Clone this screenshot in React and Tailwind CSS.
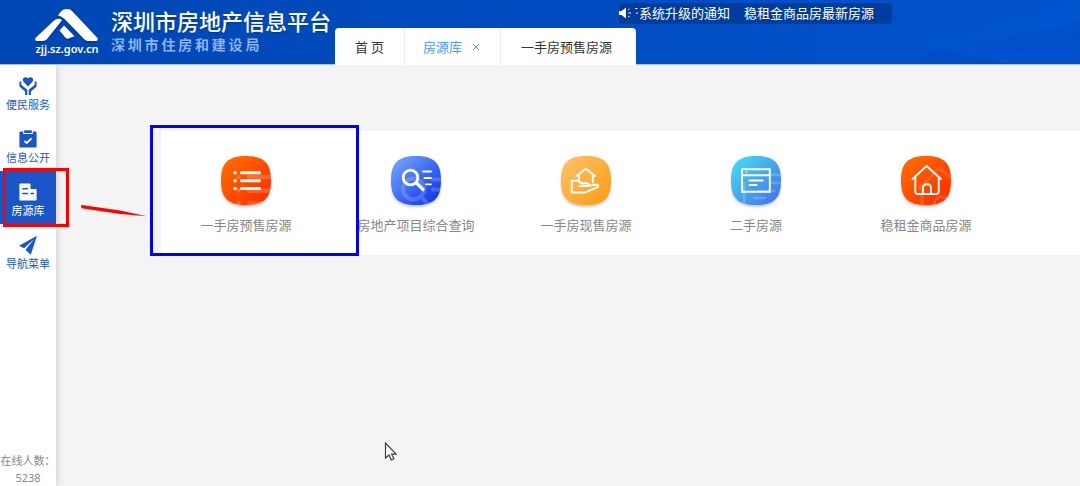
import { useId } from 'react';

const MENU = [
  { id: 'service', label: '便民服务', Icon: HeartHandsIcon },
  { id: 'public', label: '信息公开', Icon: ClipboardIcon },
  { id: 'houses', label: '房源库', Icon: BuildingIcon },
  { id: 'nav', label: '导航菜单', Icon: PlaneIcon },
];

const CARDS = [
  { label: '一手房预售房源', from: '#ff6a00', to: '#ff3000', Glyph: ListGlyph },
  { label: '房地产项目综合查询', from: '#6da0fb', to: '#1238ee', Glyph: SearchGlyph },
  { label: '一手房现售房源', from: '#fdbf62', to: '#fd9e1a', Glyph: HandHouseGlyph },
  { label: '二手房源', from: '#44d6f3', to: '#4478ec', Glyph: WindowGlyph },
  { label: '稳租金商品房源', from: '#ff6a00', to: '#ff3000', Glyph: HomeGlyph },
];

/* 侧栏图标 */
function HeartHandsIcon() {
  return (
    <svg viewBox="0 0 18 18" className="size-[18px]" fill="currentColor" aria-hidden="true">
      <path d="M9 9.4 4.700 5C3 3 4 .4 6.300.2 7.500.1 8.500.7 9 1.600c.5-.9 1.500-1.500 2.700-1.400 2.300.2 3.300 2.800 1.600 4.800Z" />
      <path d="M.4 4.500h1.900v3.300l5.400 4.400c.5.400.6.700.6 1.300V18H6.100v-3.600L.9 9.900C.5 9.500.4 9.200.4 8.700Z" />
      <path d="M17.600 4.500h-1.900v3.300l-5.400 4.400c-.5.400-.6.700-.6 1.300V18h2.200v-3.600l5.200-4.500c.4-.4.500-.7.500-1.200Z" />
    </svg>
  );
}

function ClipboardIcon() {
  return (
    <svg viewBox="0 0 18 18" className="size-[18px]" aria-hidden="true">
      <path d="M1.200 1.500h3v2.600h9.600V1.500h3a.8.8 0 0 1 .8.8v14.400a.8.8 0 0 1-.8.8H1.200a.8.8 0 0 1-.8-.8V2.300a.8.8 0 0 1 .8-.8Z" fill="currentColor" />
      <path d="M5.200.3h7.600v2.700H5.200z" fill="currentColor" />
      <path d="m5.500 11 2.200 1.900 4.800-4.500" fill="none" stroke="#fff" strokeWidth="1.900" />
    </svg>
  );
}

function BuildingIcon() {
  return (
    <svg viewBox="0 0 18 18" className="size-[18px]" aria-hidden="true">
      <path d="M1.200.5h9.300a1 1 0 0 1 1 1V6h5.300a.8.8 0 0 1 .8.8v9.900a.8.8 0 0 1-.8.8H1.200a.8.8 0 0 1-.8-.8V1.300a.8.8 0 0 1 .8-.8Z" fill="currentColor" />
      <path d="M3.300 5.800H9M3.300 10.500H9M11.500 10.500H15" stroke="#1a56c8" strokeWidth="1.600" />
    </svg>
  );
}

function PlaneIcon() {
  return (
    <svg viewBox="0 0 18 18" className="size-[18px] overflow-visible" fill="currentColor" aria-hidden="true">
      <path d="M18-.3 0 9.800l5 2.500L15 3.300 6.800 13.500v.8l5 4.500Z" />
    </svg>
  );
}

/* 卡片图标 */
function ListGlyph() {
  return (
    <>
      <g opacity=".18" strokeWidth="4.500">
        <path d="M28 21h24M28 34.500h24M28 47.500h24" />
        <path d="M17.500 21h.01M17.500 34.500h.01M17.500 47.500h.01" />
      </g>
      <g strokeWidth="3">
        <path d="M20.500 16.700h18M20.500 24.700h18M20.500 32.500h18" />
        <path d="M14 16.700h.01M14 24.700h.01M14 32.500h.01" strokeWidth="3.600" />
      </g>
    </>
  );
}

function SearchGlyph() {
  return (
    <>
      <g opacity=".18" strokeWidth="4">
        <circle cx="22.500" cy="33" r="10.500" />
        <path d="m30 41 9 9M42 23.500h10M42 33.500h10" />
      </g>
      <circle cx="19.500" cy="21.500" r="7.300" strokeWidth="2.800" />
      <path d="m25.500 27 6.500 6.500" strokeWidth="3.200" />
      <path d="M32 15.500h8M33.500 22h6.500M35 28.300h5" strokeWidth="1.800" />
    </>
  );
}

function HandHouseGlyph() {
  return (
    <g strokeWidth="1.900" strokeLinejoin="miter">
      <path d="m15.500 20 9.300-7.300L34 20M18 18.500V26l3 1.500M31.800 18.500v8" />
      <path d="M18.500 30h5.500c5 0 5-2.800 2-2.800h-5.500L17 24.800h-6.300v11.700H24l12.500-5.300c1.500-1.200.5-2.700-1-2.700L27 30" />
    </g>
  );
}

function WindowGlyph() {
  return (
    <>
      <g opacity=".2" strokeWidth="2.500">
        <path d="M13 50V27M40 19h12M40 27h12M27 35h16M23 42h11" />
      </g>
      <path d="M11 13.300h27.800v22.400H11zM11 19.300h27.800" strokeWidth="1.900" strokeLinejoin="miter" />
      <path d="M15.500 16.300h.01" strokeWidth="1.600" />
      <path d="M18.500 24.500h13M18.500 29h7" strokeWidth="2.200" />
    </>
  );
}

function HomeGlyph() {
  return (
    <>
      <path d="M21 50V34l-2-2 19-20 14 12M33 50c0-12 13-12 15-4" opacity=".12" strokeWidth="3" />
      <g strokeWidth="1.900">
        <path d="M11.500 23 25.500 10 40 23M14.300 21v14.500c0 1.500 1 2.500 2.500 2.500h18.400c1.500 0 2.500-1 2.500-2.500V21" />
        <path d="M22 38v-6c0-5 8-5 8 0v6" />
      </g>
    </>
  );
}

const SQUIRCLE = 'M25 0C43 0 50 7 50 24.500S43 49 25 49 0 42 0 24.500 7 0 25 0Z';

const CardIcon = ({ from, to, Glyph }) => {
  const id = useId();
  return (
    <svg viewBox="0 0 50 50" className="size-[50px] overflow-visible drop-shadow-[0_2px_1px_rgba(0,0,0,0.2)]" aria-hidden="true">
      <defs>
        <linearGradient id={`${id}-fill`} x1="0" y1="0" x2="1" y2="1">
          <stop offset="0.1" stopColor={from} />
          <stop offset="0.9" stopColor={to} />
        </linearGradient>
        <clipPath id={`${id}-clip`}>
          <path d={SQUIRCLE} />
        </clipPath>
      </defs>
      <path d={SQUIRCLE} fill={`url(#${id}-fill)`} />
      <g clipPath={`url(#${id}-clip)`} fill="none" stroke="#fff" strokeLinecap="round" strokeLinejoin="round">
        <Glyph />
      </g>
    </svg>
  );
};

const Logo = () => (
  <svg viewBox="0 0 64 34" className="h-[34px] w-16 drop-shadow-[0_1px_1px_rgba(0,0,0,0.3)]" fill="#fff" aria-hidden="true">
    <path d="M23 7.500c3-4.500 5-6.500 9-6.500 2.500 0 4 .8 5.500 2.500L62 29.500c1.500 2 1 3.500-1 3.500h-7c-2 0-3.500-.5-5-2L31 12.500C28.500 10 26.500 8.500 23 7.500Z" />
    <path d="M1 29.500 18.500 13c3-2.700 6-3 8.500-.8L12.500 30.500C11 32.300 9.500 33 7.500 33H2c-2 0-2.500-1.800-1-3.500Z" />
    <path d="m24.500 22.500 4.500-5 10.500 10.700-6.500 2.600c-2-.3-3-1.300-4-2.800Z" />
  </svg>
);

/* 右侧波纹背景 */
const HeaderWaves = () => (
  <svg viewBox="0 0 220 64" className="pointer-events-none absolute right-0 bottom-0 h-16 w-[220px]" fill="none" aria-hidden="true">
    <path d="M50 44C110 36 170 18 220 0v22C170 36 120 44 70 50Z" fill="#0058d2" opacity=".4" />
    <path d="M70 50C120 44 170 36 220 22v42H60Z" fill="#004bc6" opacity=".6" />
    <g stroke="#0a60d8" strokeWidth="1" opacity=".4">
      {Array.from({ length: 13 }, (_, i) => (
        <path key={i} d={`M${80 + i * 5} ${50 + i} Q${155 + i * 3} ${44 + i * 2} 220 ${25 + i * 3}`} />
      ))}
    </g>
  </svg>
);

const NoticeBar = () => (
  <div className="absolute top-[3px] left-[619px] flex h-[21px] w-[273px] items-center rounded-sm bg-[#003c9c] pb-0.5 text-[13px] leading-5 whitespace-nowrap text-white">
    <svg viewBox="0 0 20 12" className="h-3 w-5 shrink-0" aria-hidden="true">
      <path d="M0 4h2.500L7 .5v11L2.500 8H0Z" fill="#fff" />
      <path d="m9 3 1.500-1M9.500 6H12M9 9l1.500 1M16 1.500h2.500M17 6h2" stroke="#fff" strokeWidth="1" />
    </svg>
    <div className="flex gap-3.5">
      <a href="#notice">系统升级的通知</a>
      <a href="#latest">稳租金商品房最新房源</a>
    </div>
  </div>
);

const Header = () => (
  <header className="relative flex h-[65px] shrink-0 border-b border-[#a9bfe6] bg-linear-to-r from-[#0047b5] to-[#0052cc]">
    <HeaderWaves />
    <div className="flex w-[335px] shrink-0 gap-3 pt-2 pl-[35px] text-white">
      <div className="flex w-16 flex-col items-center">
        <Logo />
        <span className="font-[Noto_Sans] text-[11px] leading-[14px] font-semibold">zjj.sz.gov.cn</span>
      </div>
      <div className="whitespace-nowrap">
        <h1 className="text-[22px] leading-6 font-medium text-shadow-sm">深圳市房地产信息平台</h1>
        <p className="text-[14px] leading-6 font-bold tracking-[0.2em] text-[#8db4f0]">深圳市住房和建设局</p>
      </div>
    </div>
    <nav className="relative mt-7 -mb-px flex divide-x divide-[#e8eaf0] overflow-hidden rounded-t bg-white text-[13px] whitespace-nowrap text-[#333]">
      <a href="#home" className="flex items-center px-5">首 页</a>
      <div className="flex items-center gap-2 px-[18px] text-[#409eff]">
        <a href="#houses">房源库</a>
        <button type="button" aria-label="关闭" className="flex w-3 justify-center">
          <svg viewBox="0 0 8 8" className="size-2" stroke="currentColor" aria-hidden="true">
            <path d="m1 1 6 6M7 1 1 7" />
          </svg>
        </button>
      </div>
      <a href="#presale" className="flex items-center pr-6 pl-5">一手房预售房源</a>
    </nav>
    <NoticeBar />
  </header>
);

const Sidebar = ({ active }) => (
  <aside className="flex w-14 shrink-0 flex-col justify-between bg-white shadow-[2px_0_6px_rgba(0,0,0,0.12)]">
    <nav>
      {MENU.map(({ id, label, Icon }) => (
        <a
          key={id}
          href={`#${id}`}
          className={`flex h-[53px] flex-col items-center gap-px pt-3 text-[11px] leading-4 whitespace-nowrap ${
            id === active ? 'bg-[#1a56c8] text-white' : 'text-[#1a56c8]'
          }`}
        >
          <Icon />
          {label}
        </a>
      ))}
    </nav>
    <p className="text-center text-[11px] leading-[17px] whitespace-nowrap text-[#888]">
      在线人数：
      <span className="block font-[Noto_Sans]">5238</span>
    </p>
  </aside>
);

/* 标注层 */
const Annotations = () => (
  <div className="pointer-events-none absolute inset-0" aria-hidden="true">
    <div className="absolute top-[168px] left-[3px] h-[59px] w-[66px] border-3 border-[#f00]" />
    <div className="absolute top-[125px] left-[150px] h-[131px] w-[209px] border-3 border-[#00f]" />
    <svg viewBox="0 0 68 14" className="absolute top-[204px] left-20 h-3.5 w-[68px]" fill="#f00">
      <path d="M1 1.500 2 1l38 5.500 27 5.800-27-2.300L1.500 4.200Z" />
    </svg>
    <svg viewBox="0 0 14 20" className="absolute top-[442px] left-[384px] h-5 w-3.5" fill="#fff" stroke="#3a3a48" strokeWidth="1.200">
      <path d="M1.500 1v15l3.500-3 2.200 5 2.600-1.200-2.200-4.600h4.400Z" />
    </svg>
  </div>
);

export default function App() {
  return (
    <div className="relative flex min-h-screen flex-col overflow-hidden bg-[#f4f4f4] font-['Noto_Sans_CJK_SC',sans-serif]">
      <Header />
      <div className="flex flex-1">
        <Sidebar active="houses" />
        <main className="min-w-0 flex-1 pt-[66px] pl-[105px]">
          <div className="flex bg-white pt-[25px] pb-5">
            {CARDS.map(({ label, ...icon }) => (
              <a key={label} href="#list" className="flex w-[170px] flex-col items-center gap-[9px] text-[13px] leading-5 whitespace-nowrap text-[#888]">
                <CardIcon {...icon} />
                {label}
              </a>
            ))}
          </div>
        </main>
      </div>
      <Annotations />
    </div>
  );
}
